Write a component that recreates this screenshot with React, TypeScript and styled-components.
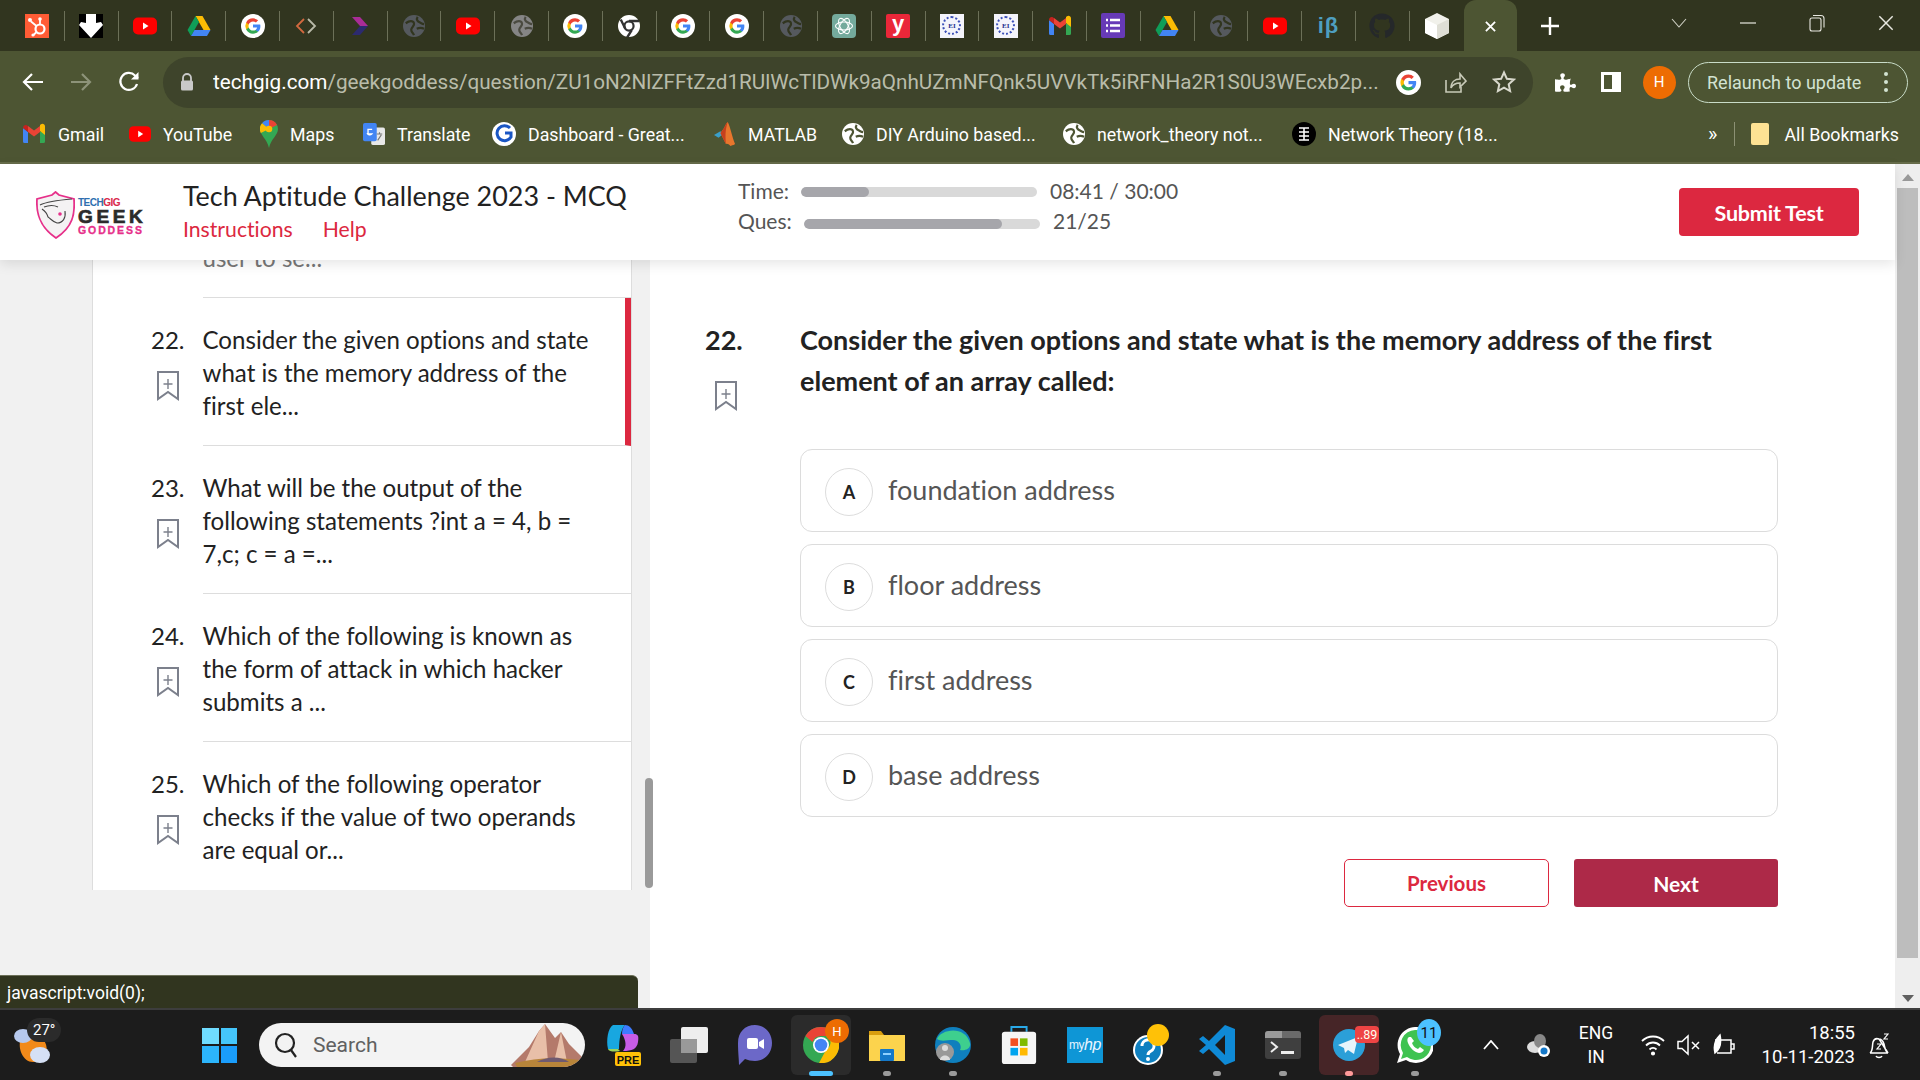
import React from "react";
import styled, { createGlobalStyle } from "styled-components";
import { FaGithub, FaPuzzlePiece } from "react-icons/fa";

const Global = createGlobalStyle`
  html, body { margin: 0; padding: 0; height: 100%; overflow: hidden; }
  #root { height: 100%; }
  * { box-sizing: border-box; }
  body { font-family: "Lato", "Liberation Sans", sans-serif; font-variant-ligatures: none; }
`;

const Shell = styled.div`
  width: 1920px; height: 1080px; display: flex; flex-direction: column; overflow: hidden; background: #fff;
`;
const TabStrip = styled.div`
  height: 51px; background: #31351f; display: flex; align-items: center; padding-left: 11px; flex: none;
`;
const Tab = styled.div`
  width: 53.8px; height: 30px; display: flex; align-items: center; justify-content: center;
  border-right: 1px solid #6c7058; flex: none;
  &:nth-child(27) { border-right: none; }
`;
const ActiveTab = styled.div`
  width: 53px; height: 51px; background: #4d5533; border-radius: 12px 12px 0 0;
  display: flex; align-items: center; justify-content: center; color: #fff; flex: none; padding-top: 2px;
`;
const NewTab = styled.div`
  width: 66px; height: 51px; display: flex; align-items: center; justify-content: center; color: #fff; flex: none;
`;
const WinControls = styled.div`
  margin-left: auto; display: flex; align-items: center; height: 51px; color: #e8e8e0;
`;
const WinButton = styled.div`
  width: 69px; height: 51px; display: flex; align-items: center; justify-content: center;
  margin-top: -6px;
`;
const Toolbar = styled.div`
  height: 59px; background: #4d5533; display: flex; align-items: center; padding-top: 3px; flex: none; color: #fff;
`;
const NavButton = styled.div<{ $dim?: boolean }>`
  width: 48px; height: 40px; display: flex; align-items: center; justify-content: center;
  color: ${(p) => (p.$dim ? "#8d9379" : "#fff")};
  &:first-child { margin-left: 9px; }
`;
const Omnibox = styled.div`
  margin: 0 5px 0 10px; width: 1370px; height: 51px; border-radius: 26px; background: #3e442b;
  display: flex; align-items: center; padding-left: 17px; flex: none;
`;
const UrlText = styled.div`
  margin-left: 19px; font: 400 20.7px "Roboto", sans-serif; color: #b9bcaa; white-space: nowrap; width: 1171px; overflow: hidden; flex: none;
  b { color: #fff; font-weight: 400; }
`;
const OmniIcon = styled.div`
  width: 48px; display: flex; justify-content: center; align-items: center; flex: none; color: #c8cab8;
`;
const ToolIcon = styled.div<{ $w: number }>`
  width: ${(p) => p.$w}px; display: flex; justify-content: center; align-items: center; flex: none;
`;
const Avatar = styled.div`
  width: 33px; height: 33px; border-radius: 50%; background: #ed6c02; color: #fff; font: 400 15px "Roboto", sans-serif;
  display: flex; align-items: center; justify-content: center;
`;
const Relaunch = styled.div`
  width: 220px; height: 41px; border: 1.5px solid #c9dcc8; border-radius: 21px; color: #d3e3d2;
  font: 400 18px "Roboto", sans-serif; display: flex; align-items: center; justify-content: space-between; padding: 0 19px 0 18px;
`;
const Dots = styled.span`
  display: flex; flex-direction: column; gap: 4px;
  i { width: 4px; height: 4px; border-radius: 50%; background: #d3e3d2; display: block; }
`;
const Bookmarks = styled.div`
  height: 54px; background: #4d5533; display: flex; align-items: center; padding: 0 0 4px 22px; flex: none;
  border-bottom: 2px solid #666c4a;
`;
const Bookmark = styled.div<{ $w: number }>`
  width: ${(p) => p.$w}px; display: flex; align-items: center; gap: 12px; flex: none;
  font: 400 17.8px "Roboto", sans-serif; color: #fff; white-space: nowrap;
`;
const BookmarkEnd = styled.div`
  margin-left: auto; display: flex; align-items: center; color: #fff; font: 400 17.8px "Roboto", sans-serif; padding-right: 21px;
`;
const Chevrons = styled.span`
  font-size: 20px; margin-right: 17px;
`;
const BarSep = styled.span`
  width: 1px; height: 24px; background: #8c9174; margin-right: 16px;
`;
const Folder = styled.span`
  width: 18px; height: 22px; background: #fde293; border-radius: 2px; margin-right: 15px; display: block;
`;
const PageArea = styled.div`
  flex: 1; min-height: 0; display: flex;
`;
const Page = styled.div`
  flex: 1; position: relative; display: flex; flex-direction: column; min-width: 0;
`;
const Header = styled.header`
  height: 96px; flex: none; background: #fff; display: flex; align-items: flex-start; position: relative; z-index: 2;
  box-shadow: 0 4px 12px rgba(0,0,0,.1);
`;
const LogoBox = styled.div`
  margin: 27px 0 0 36px; width: 147px; height: 50px; display: flex; gap: 3px; flex: none;
`;
const LogoText = styled.div`
  display: flex; flex-direction: column; font-family: "Liberation Sans", sans-serif; padding-top: 7px; line-height: 1;
`;
const LogoTech = styled.span`
  font-size: 10px; font-weight: 700; color: #2f6fb0; height: 11px; letter-spacing: -.5px;
  em { color: #d9284a; font-style: normal; }
`;
const LogoGeek = styled.span`
  font-size: 19px; font-weight: 700; color: #2b2b2b; letter-spacing: 3.6px; height: 16px; line-height: 16px; -webkit-text-stroke: .7px #2b2b2b;
`;
const LogoGoddess = styled.span`
  font-size: 10.5px; font-weight: 700; color: #e6308a; letter-spacing: 1.9px; -webkit-text-stroke: .3px #e6308a;
`;
const TitleBlock = styled.div`
  width: 555px; padding-top: 15px; flex: none;
`;
const Title = styled.div`
  font-size: 26.9px; line-height: 34px; color: #222; white-space: nowrap;
`;
const HeaderLinks = styled.div`
  display: flex; gap: 30px; margin-top: 2px; font-size: 21.2px; line-height: 28px; color: #dc2840;
`;
const Progress = styled.div`
  padding-top: 11px; width: 941px; flex: none;
`;
const ProgressRow = styled.div<{ $indent: number }>`
  display: grid; grid-template-columns: ${(p) => p.$indent}px 236px auto; align-items: center; height: 30px;
  font-size: 21px; color: #555;
`;
const Track = styled.div<{ $drop: number }>`
  height: 10px; border-radius: 5px; background: #d9d9d9; overflow: hidden; margin-top: ${(p) => p.$drop}px; width: 236px;
`;
const Fill = styled.div`
  height: 100%; background: #a6a6ab; border-radius: 5px;
`;
const ProgressValue = styled.span`
  margin-left: 13px; white-space: nowrap;
`;
const SubmitButton = styled.button`
  margin-top: 24px; width: 180px; height: 48px; background: #dc2840; border: none; border-radius: 4px; color: #fff;
  font: 700 21.5px "Lato", sans-serif; flex: none; letter-spacing: -.2px; padding-top: 2px;
`;
const Content = styled.div`
  flex: 1; display: flex; min-height: 0;
`;
const LeftCol = styled.aside`
  width: 650px; flex: none; background: #f1f1f1; padding-left: 92px; position: relative;
`;
const ListPanel = styled.div`
  width: 540px; height: 630px; background: #fff; border: solid #ddd; border-width: 0 1px; overflow: hidden;
  display: flex; flex-direction: column; justify-content: flex-end;
`;
const Item = styled.div`
  height: 148px; flex: none; display: grid; grid-template-columns: 109.5px 1fr;
`;
const ItemSide = styled.div`
  padding-left: 58px; padding-top: 25px; font-size: 24px; line-height: 33px; color: #222;
  display: flex; flex-direction: column;
`;
const ItemBody = styled.div<{ $active?: boolean; $last?: boolean; $faded?: boolean }>`
  padding: 25px 24px 0 0; font-size: 24.1px; line-height: 33px; color: ${(p) => (p.$faded ? "#777" : "#222")}; white-space: pre-line;
  border-bottom: ${(p) => (p.$last ? "none" : "1.5px solid #ddd")};
  border-right: ${(p) => (p.$active ? "6px solid #dc2840" : "none")};
  padding-right: ${(p) => (p.$active ? "18px" : "24px")};
`;
const SmallMark = styled.div`
  margin: 15px 0 0 6px; color: #7c808c; height: 30px;
`;
const ThinThumb = styled.div`
  position: absolute; left: 645px; top: 518px; width: 8px; height: 110px; background: #9a9a9a; border-radius: 4px;
`;
const Main = styled.main`
  flex: 1; padding: 59px 117px 0 55px; min-width: 0; background: #fff;
`;
const QuestionRow = styled.div`
  display: grid; grid-template-columns: 95px 1fr;
`;
const QuestionNum = styled.div`
  font-size: 27px; font-weight: 700; line-height: 41px; color: #222;
`;
const QuestionMark = styled.div`
  margin: 21px 0 0 10px; color: #7c808c;
`;
const QuestionText = styled.div`
  font-size: 27px; font-weight: 700; line-height: 41px; color: #222;
`;
const Options = styled.div`
  margin: 35px 0 0 95px; display: flex; flex-direction: column; gap: 12px;
`;
const Option = styled.div`
  height: 83px; border: 1.5px solid #dcdcdc; border-radius: 12px; display: flex; align-items: center; padding-left: 24px;
  font-size: 27px; color: #555;
`;
const OptionLetter = styled.span`
  width: 48px; height: 48px; border: 1.5px solid #ddd; border-radius: 50%; display: flex; align-items: center; justify-content: center;
  font-size: 18px; font-weight: 700; color: #222; margin-right: 15px; margin-top: 2px;
`;
const OptionText = styled.span`
  margin-top: -3px;
`;
const Buttons = styled.div`
  margin-top: 42px; display: flex; justify-content: flex-end; gap: 25px;
`;
const PrevButton = styled.button`
  width: 205px; height: 48px; background: #fff; border: 1.5px solid #dc2840; border-radius: 5px; color: #dc2840;
  font: 700 20.5px "Lato", sans-serif;
`;
const NextButton = styled.button`
  width: 204px; height: 48px; background: #ad2948; border: none; border-radius: 3px; color: #fff;
  font: 700 21px "Lato", sans-serif;
`;
const StatusBubble = styled.div`
  position: absolute; left: 0; bottom: 0; width: 638px; height: 33px; background: #31351f; color: #fff;
  border-radius: 0 6px 0 0; padding: 7px 0 0 7px; font: 400 17.5px "Roboto", sans-serif; z-index: 3;
  border-top: 1px solid #6c7058;
`;
const PageScroll = styled.div`
  width: 25px; flex: none; background: #eee; display: flex; flex-direction: column; align-items: center; justify-content: space-between;
  position: relative; padding: 10px 0 6px;
`;
const ScrollThumb = styled.div`
  position: absolute; top: 24px; left: 2px; right: 2px; height: 770px; background: #bdbdbd;
`;
const ScrollArrow = styled.span<{ $down?: boolean }>`
  width: 0; height: 0; border-left: 6px solid transparent; border-right: 6px solid transparent;
  ${(p) => (p.$down ? "border-top: 7px solid #606060;" : "border-bottom: 7px solid #999;")}
`;
const Taskbar = styled.footer`
  height: 72px; background: #1c1c1c; border-top: 2px solid #3d3d3d; display: flex; align-items: center; flex: none; position: relative;
`;
const Weather = styled.div`
  width: 202px; padding: 9px 0 0 13px; flex: none; position: relative; height: 60px;
`;
const TempBadge = styled.span`
  position: absolute; left: 27px; top: 3px; background: #2b2b2b; color: #fff; border-radius: 12px; padding: 0 6px;
  font: 400 15px "Roboto", sans-serif; line-height: 24px;
`;
const WinLogo = styled.div`
  width: 35px; height: 35px; display: grid; grid-template-columns: 1fr 1fr; gap: 2px; flex: none; margin-right: 22px;
`;
const WinPane = styled.span<{ $c: string }>`
  background: ${(p) => p.$c};
`;
const SearchPill = styled.div`
  width: 326px; height: 44px; border-radius: 22px; background: #f3f3f3; display: flex; align-items: center; padding-left: 15px;
  font: 400 21px "Roboto", sans-serif; gap: 15px; flex: none; margin-right: 5px; position: relative; overflow: hidden; color: #606060;
`;
const Mountain = styled.div`
  position: absolute; right: 0; bottom: 0; height: 44px;
`;
const TaskItem = styled.div`
  width: 66px; height: 60px; flex: none; display: flex; align-items: center; justify-content: center; position: relative;
  border-radius: 6px;
`;
const TaskGlyph = styled.span`
  position: relative; display: flex;
`;
const TaskTile = styled.div<{ $bg: string }>`
  position: absolute; inset: 0 3px; background: ${(p) => p.$bg}; border-radius: 6px;
`;
const TaskDot = styled.span<{ $c: string; $w?: number }>`
  position: absolute; bottom: -1px; left: 50%; transform: translateX(-50%); width: ${(p) => p.$w ?? 8}px; height: 5px;
  border-radius: 3px; background: ${(p) => p.$c};
`;
const RedBadge = styled.span`
  position: absolute; top: 11px; right: 3px; width: 24px; height: 17px; border-radius: 4px; background: #ef4444;
  color: #ffe; font: 400 12.5px "Roboto", sans-serif; display: flex; align-items: center; justify-content: center;
`;
const BlueBadge = styled.span`
  position: absolute; top: 4px; right: 7px; width: 24px; height: 27px; border-radius: 50%; background: #4cc2ff;
  color: #111; font: 400 15px "Roboto", sans-serif; display: flex; align-items: center; justify-content: center;
`;
const ChromeBadge = styled.span`
  position: absolute; right: 5px; top: 4px; width: 24px; height: 24px; border-radius: 50%; background: #ed6c02; color: #fff;
  font: 400 13px "Roboto", sans-serif; display: flex; align-items: center; justify-content: center;
`;
const Tray = styled.div`
  display: flex; align-items: center; color: #fff; flex: 1; min-width: 0; padding-left: 26px; height: 100%;
`;
const TrayIcon = styled.div<{ $w: number; $ml?: number }>`
  width: ${(p) => p.$w}px; margin-left: ${(p) => p.$ml ?? 0}px; display: flex; justify-content: center; align-items: center; flex: none;
`;
const Lang = styled.div`
  width: 52px; text-align: center; font: 400 17.5px/24px "Roboto", sans-serif; flex: none;
`;
const Clock = styled.div`
  width: 112px; text-align: right; font: 400 18.5px/24px "Roboto", sans-serif; flex: none; margin-left: auto;
`;
const Bell = styled.div`
  width: 65px; padding-right: 18px; display: flex; justify-content: center; flex: none;
`;
const YTile = styled.span`
  width: 24px; height: 24px; background: #ea2739; color: #fff; border-radius: 2px; display: flex; align-items: center; justify-content: center;
  font: 700 22px "Liberation Sans", sans-serif; padding-bottom: 4px;
`;
const DocTile = styled.span`
  width: 24px; height: 24px; background: #f4f4fb; display: flex; align-items: center; justify-content: center;
`;
const DocSeal = styled.span`
  width: 19px; height: 19px; border: 2px dotted #3c50b8; border-radius: 50%; display: flex; align-items: center; justify-content: center;
  font: 700 7px "Liberation Serif", serif; color: #1d2f8f;
`;
const IbText = styled.span`
  color: #4e9fc0; font: 700 22px "Liberation Sans", sans-serif; letter-spacing: 1px;
`;
const MyHp = styled.span`
  width: 36px; height: 36px; background: #0e96d6; color: #e8f5ff; font: 400 12px "Liberation Sans", sans-serif;
  display: flex; align-items: center; justify-content: center; letter-spacing: -.4px;
  em { font-size: 16px; font-style: italic; }
`;

const GoogleG = ({ s = 24 }: { s?: number }) => (
  <svg width={s} height={s} viewBox="0 0 26 26">
    <circle cx="13" cy="13" r="13" fill="#fff" />
    <path d="M21 13.2c0-.6-.1-1.200-.2-1.700H13v3.200h4.500a3.900 3.900 0 0 1-1.700 2.500v2.100h2.700c1.600-1.500 2.500-3.600 2.500-6.100z" fill="#4285F4" />
    <path d="M13 21.300c2.200 0 4.100-.7 5.500-2l-2.700-2.100c-.7.500-1.700.8-2.800.8-2.200 0-4-1.400-4.600-3.400H5.600v2.200a8.300 8.300 0 0 0 7.400 4.500z" fill="#34A853" />
    <path d="M8.400 14.600a5 5 0 0 1 0-3.200V9.200H5.600a8.300 8.300 0 0 0 0 7.600z" fill="#FBBC05" />
    <path d="M13 8c1.200 0 2.300.4 3.200 1.300l2.400-2.400A8.100 8.100 0 0 0 13 4.700a8.300 8.300 0 0 0-7.400 4.500l2.800 2.200C9 9.400 10.800 8 13 8z" fill="#EA4335" />
  </svg>
);
const Yt = ({ s = 24 }: { s?: number }) => (
  <svg width={s} height={s} viewBox="0 0 24 24">
    <rect x="0" y="3.500" width="24" height="17" rx="5" fill="#f00" />
    <path d="M10 8.500v7l5.500-3.500z" fill="#fff" />
  </svg>
);
const Drive = ({ s = 24 }: { s?: number }) => (
  <svg width={s} height={s} viewBox="0 0 24 24">
    <path d="M8.500 2h7l8 14h-7z" fill="#FBBC04" />
    <path d="M8.500 2 .5 16l3.500 6 8-14z" fill="#0F9D58" />
    <path d="M4 22h16l3.500-6h-16z" fill="#4285F4" />
  </svg>
);
const Globe = ({ s = 22, c = "#31351f", f = "#55595e" }: { s?: number; c?: string; f?: string }) => (
  <svg width={s} height={s} viewBox="0 0 24 24" fill="none">
    <circle cx="12" cy="12" r="12" fill={f} />
    <path d="M3 9c4-3 8-3 9 0s-3 4-3 7 2 3 3 6M16 2c-2 3 0 5 2 6s3 2 5 2M15 15c2-1 6-1 8 0" stroke={c} strokeWidth="2.400" />
  </svg>
);
const Gmail = ({ s = 24 }: { s?: number }) => (
  <svg width={s} height={s} viewBox="0 0 24 24">
    <path d="M1 21V6l5 4v11H2.500A1.500 1.500 0 0 1 1 19.500z" fill="#4285F4" />
    <path d="M23 21V6l-5 4v11h3.500a1.500 1.500 0 0 0 1.500-1.500z" fill="#34A853" />
    <path d="M18 4v6l5 4V5.500C23 3 20.500 2 19 3.200z" transform="translate(0 -1)" fill="#FBBC04" />
    <path d="M6 10V4l6 4.500L18 4v6l-6 4.500z" fill="#EA4335" />
    <path d="M1 6c0-2.500 2.500-3.500 4-2.500L6 4v6L1 6z" fill="#C5221F" />
  </svg>
);
const ChromeBW = ({ s = 22 }: { s?: number }) => (
  <svg width={s} height={s} viewBox="0 0 24 24">
    <circle cx="12" cy="12" r="12" fill="#fff" />
    <circle cx="12" cy="12" r="5" fill="#fff" stroke="#333" strokeWidth="2.400" />
    <path d="M12 6.500h11M8 15 3 5M15 16.500l-5 8" stroke="#333" strokeWidth="2.600" />
  </svg>
);
const Bm = ({ w = 22, h = 30 }: { w?: number; h?: number }) => (
  <svg width={w} height={h} viewBox="0 0 22 30" fill="none" stroke="currentColor" strokeWidth="2">
    <path d="M1 1h20v27l-10-7-10 7z" />
    <path d="M11 8v10M6.500 13h9" strokeWidth="1.400" />
  </svg>
);
const ArrowLeft = () => (
  <svg width="24" height="24" viewBox="0 0 24 24" fill="none" stroke="currentColor" strokeWidth="2.200">
    <path d="M22 12H3M11 4l-8 8 8 8" />
  </svg>
);
const ArrowRight = () => (
  <svg width="24" height="24" viewBox="0 0 24 24" fill="none" stroke="currentColor" strokeWidth="2.200">
    <path d="M2 12h19M13 4l8 8-8 8" />
  </svg>
);
const Reload = () => (
  <svg width="24" height="24" viewBox="0 0 24 24" fill="none" stroke="currentColor" strokeWidth="2.200">
    <path d="M20 14a8.500 8.500 0 1 1-2-8.500L21 8" />
    <path d="M21.500 2v7.500H14z" fill="currentColor" stroke="none" />
  </svg>
);
const LockIcon = () => (
  <svg width="14" height="18" viewBox="0 0 14 18">
    <path d="M3 8V5a4 4 0 0 1 8 0v3" fill="none" stroke="#c9c9c9" strokeWidth="1.800" />
    <rect x="1" y="7.500" width="12" height="10" rx="1.500" fill="#c9c9c9" />
  </svg>
);
const Share = () => (
  <svg width="22" height="24" viewBox="0 0 22 24" fill="none" stroke="#c8cab8" strokeWidth="1.600">
    <path d="M1 10v12h15v-5" />
    <path d="M6 18c0-6 4-9 9-9V4l6 7-6 6v-4c-4 0-7 1-9 5z" />
  </svg>
);
const Star = () => (
  <svg width="24" height="24" viewBox="0 0 24 24" fill="none" stroke="#d8d8cc" strokeWidth="2">
    <path d="m12 2.500 2.900 6.300 6.900.8-5.100 4.700 1.400 6.800-6.100-3.500-6.100 3.500 1.400-6.800-5.100-4.700 6.900-.8z" />
  </svg>
);
const SidePanel = () => (
  <svg width="20" height="20" viewBox="0 0 20 20"><path d="M0 0h20v20H0zm3 3v14h8V3z" fill="#fff" fillRule="evenodd" /></svg>
);
const CloseX = ({ s = 12, w = 2 }: { s?: number; w?: number }) => (
  <svg width={s} height={s} viewBox="0 0 12 12" stroke="currentColor" strokeWidth={w}><path d="m1 1 10 10M11 1 1 11" /></svg>
);
const Plus = () => (
  <svg width="18" height="18" viewBox="0 0 18 18" stroke="#fff" strokeWidth="2.400"><path d="M9 0v18M0 9h18" /></svg>
);
const ChevronDown = () => (
  <svg width="16" height="10" viewBox="0 0 16 10" fill="none" stroke="#cfd0c4" strokeWidth="1.100"><path d="m1 1 7 8 7-8" /></svg>
);
const Minimize = () => (
  <svg width="16" height="2" viewBox="0 0 16 2"><path d="M0 1h16" stroke="#e8e8e0" strokeWidth="1.200" /></svg>
);
const Restore = () => (
  <svg width="16" height="18" viewBox="0 0 16 18" fill="none" stroke="#e8e8e0" strokeWidth="1.100">
    <rect x="1" y="4" width="11" height="13" rx="2" />
    <path d="M4 1.500h8a3 3 0 0 1 3 3v9" />
  </svg>
);
const HubTile = () => (
  <svg width="24" height="24" viewBox="0 0 24 24">
    <rect width="24" height="24" fill="#ff5c35" />
    <circle cx="15" cy="15" r="4.500" fill="none" stroke="#fff" strokeWidth="2.200" />
    <path d="M15 10V6M11.500 12 6 7.500M11.500 18l-3 3" stroke="#fff" strokeWidth="1.800" />
    <circle cx="15" cy="5" r="1.800" fill="#fff" />
    <circle cx="5" cy="6" r="2" fill="#fff" />
    <circle cx="8" cy="21" r="1.600" fill="#fff" />
  </svg>
);
const ArrowBW = () => (
  <svg width="24" height="24" viewBox="0 0 24 24">
    <rect width="24" height="24" fill="#000" />
    <path d="M7 0h10v9l5-1 2 3-12 13L0 11l2-3 5 1z" fill="#fff" />
  </svg>
);
const CodeTab = () => (
  <svg width="24" height="24" viewBox="0 0 24 24" fill="none" strokeWidth="1.800">
    <path d="M10 5 3 12l7 7" stroke="#d2693f" />
    <path d="m14 5 7 7-7 7" stroke="#b9baa9" />
  </svg>
);
const ArrowTab = () => (
  <svg width="16" height="18" viewBox="0 0 16 18">
    <path d="M0 0h8l8 9H8z" fill="#a92c97" />
    <path d="M16 9H8l-8 9h8z" fill="#2c2a6e" />
  </svg>
);
const GptTile = () => (
  <svg width="24" height="24" viewBox="0 0 24 24">
    <rect width="24" height="24" rx="4" fill="#74aa9c" />
    <g fill="none" stroke="#fff" strokeWidth="1.100">
      <ellipse cx="12" cy="12" rx="8.500" ry="4" />
      <ellipse cx="12" cy="12" rx="8.500" ry="4" transform="rotate(60 12 12)" />
      <ellipse cx="12" cy="12" rx="8.500" ry="4" transform="rotate(120 12 12)" />
    </g>
  </svg>
);
const FormsTile = () => (
  <svg width="24" height="25" viewBox="0 0 24 25">
    <rect width="24" height="25" rx="2" fill="#673ab7" />
    <path d="M5 7h2M5 12.500h2M5 18h2M9 7h10M9 12.500h10M9 18h10" stroke="#fff" strokeWidth="2.400" />
  </svg>
);
const Cube = () => (
  <svg width="26" height="28" viewBox="0 0 26 28">
    <path d="M13 1 25 7v14l-12 6L1 21V7z" fill="#f1f1eb" />
    <path d="M13 13v14L1 21V7z" fill="#fff" />
    <path d="M13 13 25 7v14l-12 6z" fill="#dfdfd6" />
  </svg>
);
const Maps = () => (
  <svg width="18" height="28" viewBox="0 0 18 28">
    <path d="M9 0a9 9 0 0 0-9 9c0 6 7 10 9 19 2-9 9-13 9-19a9 9 0 0 0-9-9z" fill="#34a853" />
    <path d="M9 0a9 9 0 0 0-7 3.300L9 9z" fill="#4285f4" />
    <path d="M9 0a9 9 0 0 1 8 5L9 9z" fill="#ea4335" />
    <path d="M2 3.300A9 9 0 0 0 .8 13L9 9z" fill="#fbbc04" />
    <circle cx="9" cy="9" r="3.300" fill="#fbbc04" />
  </svg>
);
const Translate = () => (
  <svg width="22" height="26" viewBox="0 0 24 26">
    <rect x="9" y="6" width="15" height="19" rx="2" fill="#e8e8e8" />
    <rect x="0" y="1" width="15" height="20" rx="2" fill="#4285f4" />
    <path d="M10 8H5.500v5h4a3 3 0 0 1-5-1" fill="none" stroke="#fff" strokeWidth="1.500" />
    <path d="M15 13h6M18 11v2M16 20l4-6" stroke="#777" strokeWidth="1.200" />
  </svg>
);
const GBlue = () => (
  <svg width="24" height="26" viewBox="0 0 24 26">
    <circle cx="12" cy="13" r="12" fill="#fff" />
    <path d="M18 7a7.500 7.500 0 1 0 1 9v-4h-6" fill="none" stroke="#1a56c4" strokeWidth="3" />
  </svg>
);
const Matlab = () => (
  <svg width="22" height="28" viewBox="0 0 24 28">
    <path d="M0 15 7 11l3 3-5 4z" fill="#3a9fc9" />
    <path d="M15 1c-3 3-4 8-8 12l6 12c1-1 3 0 5 2 3-1 4-1 5-2-3-7-5-18-8-24z" fill="#e8762d" />
    <path d="M15 1c-2 6-3 12-2 24l-6-12c4-4 5-9 8-12z" fill="#c6401e" />
  </svg>
);
const NetTheory = () => (
  <svg width="24" height="26" viewBox="0 0 24 26">
    <circle cx="12" cy="13" r="12" fill="#000" />
    <path d="M7 7h10M7 11h10M7 15h10M7 19h10M12 7v12" stroke="#fff" strokeWidth="1.600" fill="none" />
  </svg>
);
const WeatherIcon = () => (
  <svg width="38" height="40" viewBox="0 0 38 40">
    <path d="M8 14a16 16 0 0 1 26 12 14 14 0 0 1-14 12C10 38 4 24 8 14z" fill="#f28a1a" />
    <ellipse cx="10" cy="12" rx="9" ry="7" fill="#b6c9ee" />
    <ellipse cx="27" cy="31" rx="10" ry="8" fill="#d5e0f5" />
  </svg>
);
const SearchIcon = () => (
  <svg width="24" height="26" viewBox="0 0 24 26" fill="none" stroke="#222" strokeWidth="2.200">
    <circle cx="11" cy="11" r="9" /><path d="m17 18 5 7" />
  </svg>
);
const MountainArt = () => (
  <svg width="74" height="44" viewBox="0 0 74 44">
    <path d="M0 42 18 24l10-16 6-7 10 14 6-6 8 12 16 16v9H4z" fill="#b47a6b" />
    <path d="M28 8 34 1l3 38H14zM50 9l6 30H43z" fill="#e8bfa8" />
    <path d="M4 40c22-6 48-6 70-2v6H6z" fill="#b8853a" />
    <path d="M26 39c10-6 24-6 32 0z" fill="#6f5a70" />
  </svg>
);
const Copilot = () => (
  <svg width="36" height="42" viewBox="0 0 36 42">
    <path d="M8 1h12c-4 4-6 14-6 24H3C1 16 3 4 8 1z" fill="#18a7e0" />
    <path d="M20 1c4 0 7 3 9 9H17c0-4 1-7 3-9z" fill="#3d7bff" />
    <path d="M17 10h12c4 0 5 2 4 8-1 7-6 9-15 9 4-4 3-11-1-17z" fill="#c75ce6" />
    <path d="M3 25h10l2 2c-5 1-11 1-12-2z" fill="#9bd35a" />
    <rect x="10" y="28" width="26" height="14" rx="2" fill="#ffc107" />
    <text x="23" y="39.500" fontFamily="Liberation Sans" fontWeight="700" fontSize="11" textAnchor="middle" fill="#111">PRE</text>
  </svg>
);
const TaskView = () => (
  <svg width="38" height="36" viewBox="0 0 38 36">
    <rect x="0" y="12" width="27" height="24" rx="2" fill="#555" />
    <rect x="11" y="0" width="27" height="26" rx="2" fill="#eee" />
    <rect x="11" y="12" width="16" height="14" fill="#999" />
  </svg>
);
const Meet = () => (
  <svg width="34" height="40" viewBox="0 0 34 40">
    <path d="M17 0C7 0 0 7 0 18c0 10 1 16 1 22l6-6c3 1 6 2 10 2 10 0 17-8 17-18S27 0 17 0z" fill="#6c68c8" />
    <rect x="9" y="13" width="11" height="11" rx="2" fill="#fff" />
    <path d="m21 17 5-3v10l-5-3z" fill="#fff" />
  </svg>
);
const ChromeColor = () => (
  <svg width="36" height="36" viewBox="0 0 36 36">
    <circle cx="18" cy="18" r="18" fill="#34a853" />
    <path d="M18 0a18 18 0 0 1 15.600 9H18a9 9 0 0 0-8.500 6L2.400 9A18 18 0 0 1 18 0z" fill="#ea4335" />
    <path d="M33.600 9A18 18 0 0 1 16 36l7-13a9 9 0 0 0 2-14z" fill="#fbbc04" />
    <circle cx="18" cy="18" r="8" fill="#fff" />
    <circle cx="18" cy="18" r="6.300" fill="#4285f4" />
  </svg>
);
const Explorer = () => (
  <svg width="36" height="32" viewBox="0 0 36 32">
    <path d="M0 2h12l3 4h21v26H0z" fill="#d99e0e" />
    <rect y="6" width="36" height="26" fill="#fcd34d" />
    <rect x="11" y="20" width="14" height="12" rx="1" fill="#1478c9" />
    <rect x="14" y="24" width="8" height="2" fill="#8ed0ff" />
  </svg>
);
const Edge = () => (
  <svg width="36" height="36" viewBox="0 0 36 36">
    <circle cx="18" cy="18" r="18" fill="#0f7fbd" />
    <path d="M2 12C6 2 30-2 35 16c1 6-5 8-10 7 2-3 0-10-7-10-6 0-12 2-16-1z" fill="#3ecf8e" />
    <circle cx="10" cy="25" r="9" fill="#999" />
    <circle cx="10" cy="21" r="3" fill="#ddd" />
    <path d="M5 33c0-6 10-6 10 0z" fill="#ddd" />
  </svg>
);
const Store = () => (
  <svg width="36" height="38" viewBox="0 0 36 40">
    <path d="M10 6V1h16v5" fill="none" stroke="#29a9e8" strokeWidth="2" />
    <rect y="6" width="36" height="34" rx="3" fill="#f5f5f5" />
    <rect x="9" y="13" width="8" height="8" fill="#f25022" />
    <rect x="19" y="13" width="8" height="8" fill="#7fba00" />
    <rect x="9" y="23" width="8" height="8" fill="#00a4ef" />
    <rect x="19" y="23" width="8" height="8" fill="#ffb900" />
  </svg>
);
const Help = () => (
  <svg width="36" height="42" viewBox="0 0 36 42">
    <circle cx="15" cy="26" r="15" fill="#fff" />
    <circle cx="15" cy="26" r="13" fill="#0f80c0" />
    <path d="M9 22a6 6 0 1 1 9 5c-2 1-3 2-3 4" fill="none" stroke="#fff" strokeWidth="3" />
    <circle cx="15" cy="35" r="2" fill="#fff" />
    <circle cx="25" cy="11" r="11" fill="#ffc107" />
  </svg>
);
const VsCode = () => (
  <svg width="36" height="40" viewBox="0 0 36 40">
    <path d="M26 0 36 4v32l-10 4L10 24l-6 5-4-3 7-6-7-6 4-3 6 5z" fill="#0f8ad6" />
    <path d="M26 10 16 20l10 10z" fill="#1c1c1c" />
  </svg>
);
const Terminal = () => (
  <svg width="36" height="28" viewBox="0 0 36 28">
    <rect width="36" height="28" rx="3" fill="#3f3f3f" />
    <path d="M0 3a3 3 0 0 1 3-3h14v7H0z" fill="#9a9a9a" />
    <path d="M17 0h16a3 3 0 0 1 3 3v4H17z" fill="#6a6a6a" />
    <path d="m6 11 6 5-6 5" fill="none" stroke="#eee" strokeWidth="2" />
    <rect x="16" y="20" width="13" height="3" fill="#eee" />
  </svg>
);
const Telegram = () => (
  <svg width="32" height="32" viewBox="0 0 32 32">
    <circle cx="16" cy="16" r="16" fill="#2b9fd8" />
    <path d="m5 16 20-8-4 17-6-4-3 3-1-5z" fill="#e8f4fb" />
  </svg>
);
const WhatsApp = () => (
  <svg width="36" height="36" viewBox="0 0 36 36">
    <path d="M18 0a18 18 0 0 0-15 27L0 36l9-3A18 18 0 1 0 18 0z" fill="#fff" />
    <path d="M18 3a15 15 0 0 0-12 23l-2 6 6-2A15 15 0 1 0 18 3z" fill="#3fc351" />
    <path d="M12 10c-2 1-2 4-1 6 2 5 6 9 11 10 2 0 4-1 5-3l-4-3-2 2c-3-1-5-3-6-6l2-2-3-4z" fill="#fff" />
  </svg>
);
const Caret = () => (
  <svg width="16" height="10" viewBox="0 0 16 10" fill="none" stroke="#fff" strokeWidth="1.800"><path d="m1 9 7-8 7 8" /></svg>
);
const OneDrive = () => (
  <svg width="24" height="26" viewBox="0 0 24 26">
    <ellipse cx="8" cy="15" rx="8" ry="6" fill="#ddd" />
    <ellipse cx="13" cy="9" rx="6" ry="7" fill="#888" />
    <circle cx="17" cy="19" r="6" fill="#fff" />
    <circle cx="17" cy="19" r="3.500" fill="#1478c9" />
  </svg>
);
const Wifi = () => (
  <svg width="24" height="22" viewBox="0 0 24 22" fill="none" stroke="#fff" strokeWidth="1.800">
    <path d="M1 7c6-6 16-6 22 0M5 11.500c4-4 10-4 14 0M8.500 15.500c2-2 5-2 7 0" />
    <circle cx="12" cy="19.500" r="1.200" fill="#fff" />
  </svg>
);
const Volume = () => (
  <svg width="24" height="22" viewBox="0 0 24 22" fill="none" stroke="#fff" strokeWidth="1.500">
    <path d="M1 7.500h4L11 2v18l-6-5.500H1zM15 8l7 7M22 8l-7 7" />
  </svg>
);
const Battery = () => (
  <svg width="26" height="24" viewBox="0 0 26 24" fill="none" stroke="#fff" strokeWidth="1.500">
    <path d="M3 7h16v13H5M19 11h3v5h-3" />
    <path d="M3 20c4-3 7-8 5-18-4 4-7 10-5 18z" fill="#fff" />
  </svg>
);
const BellIcon = () => (
  <svg width="20" height="28" viewBox="0 0 20 28" fill="none" stroke="#fff" strokeWidth="1.500">
    <path d="M1 22c3-2 2-6 3-11 1-3 3-4 6-3M10 8c3 0 4 2 5 5 1 4 1 7 4 9zM1 22h18M7 25c1 2 5 2 6 0" />
    <path d="M15 3h4l-4 5h4" strokeWidth="1.200" />
    <path d="M8 13h4l-4 5h4" strokeWidth="1.200" />
  </svg>
);
const Shield = () => (
  <svg width="39" height="48" viewBox="0 0 39 48">
    <path d="M19.500 1 23 4l15 4c1 15-1 28-18 39C4 36 0 23 1 8l15-4z" fill="#f4f2f3" stroke="#e6308a" strokeWidth="1.800" />
    <path d="M4 14c8-4 20-5 32-6M6 18c3 2 5 4 6 8M12 26c3 2 5 5 9 6 6 0 9-5 8-12M8 16c5-2 10-2 14 0" fill="none" stroke="#444" strokeWidth="1.100" />
    <circle cx="24" cy="23" r="1.800" fill="#e6308a" />
  </svg>
);

const tabs: React.ReactNode[] = [
  <HubTile />, <ArrowBW />, <Yt />, <Drive />, <GoogleG />, <CodeTab />, <ArrowTab />, <Globe />, <Yt />, <Globe f="#858585" c="#4a4a40" />,
  <GoogleG />, <ChromeBW />, <GoogleG />, <GoogleG />, <Globe />, <GptTile />, <YTile>y</YTile>, <DocTile><DocSeal>EI</DocSeal></DocTile>, <DocTile><DocSeal>EI</DocSeal></DocTile>,
  <Gmail />, <FormsTile />, <Drive />, <Globe />, <Yt />, <IbText>iβ</IbText>, <FaGithub size={26} color="#25282a" />, <Cube />,
];

const marks = [
  { w: 107, icon: <Gmail />, label: "Gmail" },
  { w: 131, icon: <Yt s={22} />, label: "YouTube" },
  { w: 103, icon: <Maps />, label: "Maps" },
  { w: 129, icon: <Translate />, label: "Translate" },
  { w: 222, icon: <GBlue />, label: "Dashboard - Great..." },
  { w: 128, icon: <Matlab />, label: "MATLAB" },
  { w: 221, icon: <Globe s={22} c="#4d5533" f="#fff" />, label: "DIY Arduino based..." },
  { w: 229, icon: <Globe s={22} c="#4d5533" f="#fff" />, label: "network_theory not..." },
  { w: 230, icon: <NetTheory />, label: "Network Theory (18..." },
];

const items = [
  { n: 21, text: "\n\nuser to se...", faded: true },
  { n: 22, text: "Consider the given options and state\nwhat is the memory address of the\nfirst ele...", active: true },
  { n: 23, text: "What will be the output of the\nfollowing statements ?int a = 4, b =\n7,c; c = a =..." },
  { n: 24, text: "Which of the following is known as\nthe form of attack in which hacker\nsubmits a ..." },
  { n: 25, text: "Which of the following operator\nchecks if the value of two operands\nare equal or...", last: true },
];

const options = [
  ["A", "foundation address"],
  ["B", "floor address"],
  ["C", "first address"],
  ["D", "base address"],
];

type Task = { el: React.ReactNode; dot?: string; dotW?: number; tile?: string; extra?: React.ReactNode };
const tasks: Task[] = [
  { el: <Copilot /> },
  { el: <TaskView /> },
  { el: <Meet /> },
  { el: <ChromeColor />, dot: "#4cc2ff", dotW: 24, tile: "#2b2b2b", extra: <ChromeBadge>H</ChromeBadge> },
  { el: <Explorer />, dot: "#9b9b9b" },
  { el: <Edge />, dot: "#9b9b9b" },
  { el: <Store /> },
  { el: <MyHp>my<em>hp</em></MyHp> },
  { el: <Help /> },
  { el: <VsCode />, dot: "#9b9b9b" },
  { el: <Terminal />, dot: "#9b9b9b" },
  { el: <Telegram />, dot: "#ff9a9a", tile: "#462527", extra: <RedBadge>..89</RedBadge> },
  { el: <WhatsApp />, dot: "#9b9b9b", extra: <BlueBadge>11</BlueBadge> },
];

export default function App() {
  return (
    <Shell>
      <Global />
      <TabStrip>
        {tabs.map((t, i) => <Tab key={i}>{t}</Tab>)}
        <ActiveTab><CloseX s={11} /></ActiveTab>
        <NewTab><Plus /></NewTab>
        <WinControls>
          <WinButton><ChevronDown /></WinButton>
          <WinButton><Minimize /></WinButton>
          <WinButton><Restore /></WinButton>
          <WinButton><CloseX s={16} w={1.1} /></WinButton>
        </WinControls>
      </TabStrip>
      <Toolbar>
        <NavButton><ArrowLeft /></NavButton>
        <NavButton $dim><ArrowRight /></NavButton>
        <NavButton><Reload /></NavButton>
        <Omnibox>
          <LockIcon />
          <UrlText><b>techgig.com</b>/geekgoddess/question/ZU1oN2NlZFFtZzd1RUlWcTlDWk9aQnhUZmNFQnk5UVVkTk5iRFNHa2R1S0U3WEcxb2p...</UrlText>
          <OmniIcon><GoogleG s={25} /></OmniIcon>
          <OmniIcon><Share /></OmniIcon>
          <OmniIcon><Star /></OmniIcon>
        </Omnibox>
        <ToolIcon $w={54}><FaPuzzlePiece size={21} color="#fff" /></ToolIcon>
        <ToolIcon $w={38}><SidePanel /></ToolIcon>
        <ToolIcon $w={58}><Avatar>H</Avatar></ToolIcon>
        <Relaunch>Relaunch to update<Dots><i /><i /><i /></Dots></Relaunch>
      </Toolbar>
      <Bookmarks>
        {marks.map((m) => <Bookmark key={m.label} $w={m.w}>{m.icon}{m.label}</Bookmark>)}
        <BookmarkEnd>
          <Chevrons>»</Chevrons>
          <BarSep />
          <Folder />
          All Bookmarks
        </BookmarkEnd>
      </Bookmarks>
      <PageArea>
        <Page>
          <Header>
            <LogoBox>
              <Shield />
              <LogoText>
                <LogoTech>TECH<em>GIG</em></LogoTech>
                <LogoGeek>GEEK</LogoGeek>
                <LogoGoddess>GODDESS</LogoGoddess>
              </LogoText>
            </LogoBox>
            <TitleBlock>
              <Title>Tech Aptitude Challenge 2023 - MCQ</Title>
              <HeaderLinks><span>Instructions</span><span>Help</span></HeaderLinks>
            </TitleBlock>
            <Progress>
              <ProgressRow $indent={63}>
                <span>Time:</span>
                <Track $drop={3}><Fill style={{ width: "29%" }} /></Track>
                <ProgressValue>08:41 / 30:00</ProgressValue>
              </ProgressRow>
              <ProgressRow $indent={66}>
                <span>Ques:</span>
                <Track $drop={7}><Fill style={{ width: "84%" }} /></Track>
                <ProgressValue>21/25</ProgressValue>
              </ProgressRow>
            </Progress>
            <SubmitButton>Submit Test</SubmitButton>
          </Header>
          <Content>
            <LeftCol>
              <ListPanel>
                {items.map((it) => (
                  <Item key={it.n}>
                    <ItemSide>
                      {it.n !== 21 && <span>{it.n}.</span>}
                      {it.n !== 21 && <SmallMark><Bm /></SmallMark>}
                    </ItemSide>
                    <ItemBody $active={it.active} $last={it.last} $faded={it.faded}>{it.text}</ItemBody>
                  </Item>
                ))}
              </ListPanel>
              <ThinThumb />
            </LeftCol>
            <Main>
              <QuestionRow>
                <div>
                  <QuestionNum>22.</QuestionNum>
                  <QuestionMark><Bm /></QuestionMark>
                </div>
                <QuestionText>Consider the given options and state what is the memory address of the first element of an array called:</QuestionText>
              </QuestionRow>
              <Options>
                {options.map(([l, t]) => (
                  <Option key={l}><OptionLetter>{l}</OptionLetter><OptionText>{t}</OptionText></Option>
                ))}
              </Options>
              <Buttons>
                <PrevButton>Previous</PrevButton>
                <NextButton>Next</NextButton>
              </Buttons>
            </Main>
          </Content>
          <StatusBubble>javascript:void(0);</StatusBubble>
        </Page>
        <PageScroll>
          <ScrollArrow />
          <ScrollThumb />
          <ScrollArrow $down />
        </PageScroll>
      </PageArea>
      <Taskbar>
        <Weather><WeatherIcon /><TempBadge>27°</TempBadge></Weather>
        <WinLogo>
          <WinPane $c="#6fdcff" /><WinPane $c="#45c6fb" /><WinPane $c="#2cb5fb" /><WinPane $c="#1a9dfb" />
        </WinLogo>
        <SearchPill><SearchIcon />Search<Mountain><MountainArt /></Mountain></SearchPill>
        {tasks.map((t, i) => (
          <TaskItem key={i}>
            {t.tile && <TaskTile $bg={t.tile} />}
            <TaskGlyph>{t.el}</TaskGlyph>
            {t.extra}
            {t.dot && <TaskDot $c={t.dot} $w={t.dotW} />}
          </TaskItem>
        ))}
        <Tray>
          <TrayIcon $w={34}><Caret /></TrayIcon>
          <TrayIcon $w={62}><OneDrive /></TrayIcon>
          <Lang>ENG<br />IN</Lang>
          <TrayIcon $w={36} $ml={13}><Wifi /></TrayIcon>
          <TrayIcon $w={36}><Volume /></TrayIcon>
          <TrayIcon $w={36}><Battery /></TrayIcon>
          <Clock>18:55<br />10-11-2023</Clock>
          <Bell><BellIcon /></Bell>
        </Tray>
      </Taskbar>
    </Shell>
  );
}
